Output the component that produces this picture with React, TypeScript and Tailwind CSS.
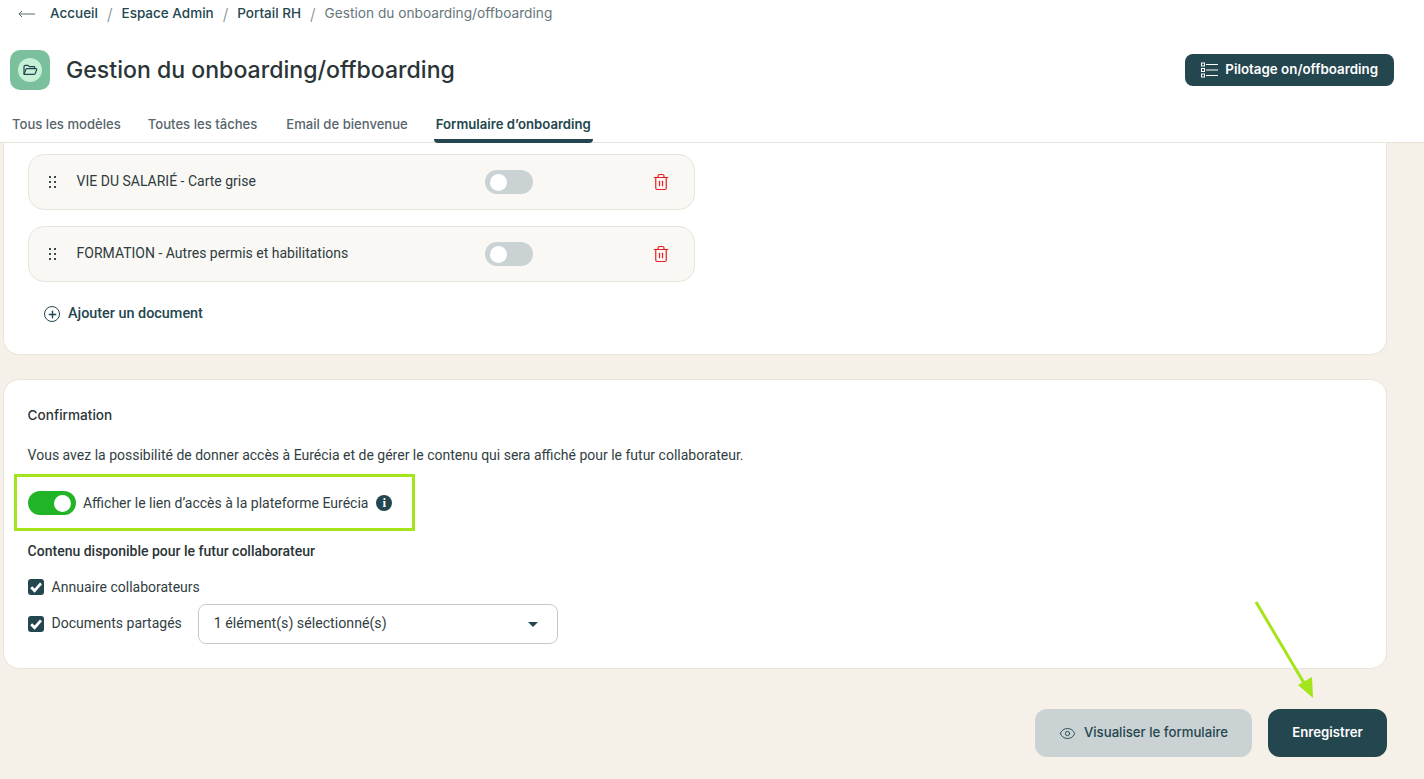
import { Eye, Plus, Trash2 } from 'lucide-react';

const dark = 'text-[#24464f]';

function Crumb({ label }: { label: string }) {
  return (
    <>
      <a className={`font-medium ${dark}`}>{label}</a>
      <span className="text-[#7c8a8f] text-[16px] font-light">/</span>
    </>
  );
}

function Toggle({ on }: { on?: boolean }) {
  return (
    <div className={`flex items-center w-12 h-6 rounded-full px-[5px] ${on ? 'justify-end bg-[#22b427]' : 'justify-start bg-[#cbd2d3]'}`}>
      <div className="w-[17px] h-[17px] rounded-full bg-white" />
    </div>
  );
}

function DocRow({ label }: { label: string }) {
  return (
    <div className="flex items-center w-[667px] h-14 rounded-2xl border border-[#e9e5dc] bg-[#f9f8f4]">
      <svg width="8" height="13" viewBox="0 0 8 13" className="ml-5 shrink-0 fill-[#3b4a4f]">
        <rect x="0" y="0" width="2" height="2" />
        <rect x="5" y="0" width="2" height="2" />
        <rect x="0" y="5" width="2" height="2" />
        <rect x="5" y="5" width="2" height="2" />
        <rect x="0" y="10" width="2" height="2" />
        <rect x="5" y="10" width="2" height="2" />
      </svg>
      <span className="ml-[19.6px] w-[408.4px] -mt-[2px] text-sm text-[#2f3b3f]">{label}</span>
      <Toggle />
      <Trash2 size={18} strokeWidth={1.6} className="ml-[119px] text-[#ee1c25]" />
    </div>
  );
}

function Check() {
  return (
    <div className="flex items-center justify-center w-4 h-4 rounded-[3px] bg-[#24464f]">
      <svg width="14" height="14" viewBox="0 0 14 14" fill="none" stroke="white" strokeWidth="2.8">
        <path d="M2.2 7.2 5.6 10.6 12 3.4" />
      </svg>
    </div>
  );
}

export default function App() {
  return (
    <div className="relative flex flex-col w-[1424px] h-[779px] overflow-hidden bg-[#f5f0e8] font-['Roboto',sans-serif]">
      <header className="h-[143px] shrink-0 bg-white border-b border-[#e6e2d9]">
        <nav className="flex items-center gap-[9px] h-[27px] pl-[18px] text-[13.5px] font-['Inter',sans-serif]">
          <svg width="17" height="8" viewBox="0 0 17 8" fill="none" stroke="#5d6c71" className="mr-[6px]">
            <path d="M17 4H1M4 1 1 4l3 3" />
          </svg>
          <Crumb label="Accueil" />
          <Crumb label="Espace Admin" />
          <Crumb label="Portail RH" />
          <span className="text-[13.7px] text-[#67767b]">Gestion du onboarding/offboarding</span>
        </nav>
        <div className="flex items-center h-[40px] mt-[23px] pl-[10px] pr-[30px]">
          <div className="flex items-center justify-center w-10 h-10 rounded-[10px] bg-[#7bc09d]">
            <div className="flex items-center justify-center w-6 h-6 rounded-full bg-[#c6f1d6]">
              <svg width="16" height="16" viewBox="0 0 24 24" fill="none" stroke="#24464f" strokeWidth="1.8" strokeLinejoin="round">
                <path d="M3 18V7a2 2 0 0 1 2-2h4l2 2h7a1 1 0 0 1 1 1v2" />
                <path d="M3 18l3-7a1.5 1.5 0 0 1 1.4-1H21a1 1 0 0 1 1 1.3L20 17a2 2 0 0 1-2 1.5H3z" />
              </svg>
            </div>
          </div>
          <h1 className="ml-4 text-[23.1px] font-medium text-[#2b3437] font-['Inter',sans-serif]">Gestion du onboarding/offboarding</h1>
          <button className="flex items-center gap-[7px] ml-auto h-8 px-4 pb-[2px] rounded-lg bg-[#24464f] text-white text-[13.35px] font-semibold font-['Inter',sans-serif]">
            <svg width="17" height="16" viewBox="0 0 17 16" fill="none" stroke="white" strokeWidth="1" className="mt-[2px]">
              <rect x="0.5" y="1" width="3" height="3" />
              <rect x="0.5" y="6.5" width="3" height="3" />
              <rect x="0.5" y="12" width="3" height="3" />
              <path d="M5 2.5h12M5 8h12M5 13.5h12" />
            </svg>
            Pilotage on/offboarding
          </button>
        </div>
        <div className="flex items-end gap-[27px] h-[39px] mt-[14px] pl-3 text-[13.1px] font-medium text-[#56666b] font-['Inter',sans-serif]">
          <span className="h-[28px]">Tous les modèles</span>
          <span className="h-[28px]">Toutes les tâches</span>
          <span className="h-[28px] ml-[2px]">Email de bienvenue</span>
          <span className={`h-[28px] ml-[-1px] px-[2px] border-b-[4px] border-[#24464f] rounded-b-sm font-semibold text-[13.15px] ${dark}`}>Formulaire d’onboarding</span>
        </div>
      </header>

      <main className="flex flex-col pl-[3px] w-[1387px]">
        <section className="h-[212px] rounded-b-2xl bg-white border border-t-0 border-[#e9e5dc] pt-[11px] pl-6">
          <div className="flex flex-col gap-4">
            <DocRow label="VIE DU SALARIÉ - Carte grise" />
            <DocRow label="FORMATION - Autres permis et habilitations" />
          </div>
          <div className="flex items-center gap-[8px] mt-[23px] ml-[16px] h-[18px]">
            <div className={`flex items-center justify-center w-4 h-4 rounded-full border border-[#24464f] ${dark}`}>
              <Plus size={11} strokeWidth={3} />
            </div>
            <span className={`text-[14.4px] font-medium ${dark}`}>Ajouter un document</span>
          </div>
        </section>

        <section className="h-[290px] mt-[24px] rounded-2xl bg-white border border-[#e9e5dc] pl-[23.6px] pt-[26px] text-[14px] text-[#323e42]">
          <h2 className="h-[18px] text-[13.6px] font-medium leading-[18px] text-[#2b3437] font-['Inter',sans-serif]">Confirmation</h2>
          <p className="mt-[21px] h-5 leading-5">Vous avez la possibilité de donner accès à Eurécia et de gérer le contenu qui sera affiché pour le futur collaborateur.</p>
          <div className="flex items-center mt-[26px] h-6">
            <Toggle on />
            <span className="ml-[7.4px]">Afficher le lien d’accès à la plateforme Eurécia</span>
            <div className="flex items-center justify-center ml-[8px] w-4 h-4 rounded-full bg-[#24464f] text-white text-[13px] font-black font-['Liberation_Serif',serif]">i</div>
          </div>
          <h3 className="mt-[27px] h-[18px] leading-[18px] font-medium text-[#2b3437]">Contenu disponible pour le futur collaborateur</h3>
          <div className="flex items-center gap-2 mt-[18px] h-[18px]">
            <Check />
            <span>Annuaire collaborateurs</span>
          </div>
          <div className="flex items-center mt-[8px] h-10">
            <Check />
            <span className="ml-2 -mt-[1px]">Documents partagés</span>
            <div className="flex items-center justify-between w-[360px] h-10 ml-4 pl-[15px] pr-[19px] rounded-lg border border-[#c9c9c9]">
              <span className="text-[14.2px] -mt-[1px]">1 élément(s) sélectionné(s)</span>
              <div className="w-0 h-0 border-x-[5px] border-x-transparent border-t-[5px] border-t-[#24464f]" />
            </div>
          </div>
        </section>

        <div className="flex justify-end gap-4 mt-[40px]">
          <button className={`flex items-center justify-center gap-2 w-[217px] h-12 rounded-xl bg-[#cbd2d3] text-[13.2px] font-medium font-['Inter',sans-serif] ${dark}`}>
            <Eye size={17} strokeWidth={1.3} />
            Visualiser le formulaire
          </button>
          <button className="w-[119px] h-12 rounded-xl bg-[#24464f] text-white text-[13.2px] font-semibold font-['Inter',sans-serif]">Enregistrer</button>
        </div>
      </main>

      {/* annotations posées sur la capture */}
      <div className="absolute left-[14px] top-[474px] w-[401px] h-[57px] border-[3px] border-[#a4e41a]" />
      <svg width="70" height="110" viewBox="0 0 70 110" className="absolute left-[1250px] top-[597px]">
        <path d="M6 5 54 86" stroke="#a4e41a" strokeWidth="3" />
        <path d="M48 88 62 80 63 101z" fill="#a4e41a" />
      </svg>
    </div>
  );
}
